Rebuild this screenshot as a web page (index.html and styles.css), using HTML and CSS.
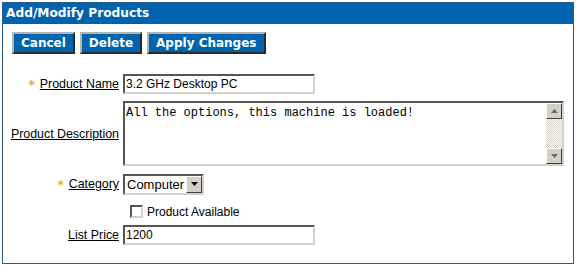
FILE: index.html
```html
<!DOCTYPE html>
<html lang="en">
<head>
  <meta charset="UTF-8" />
  <title>Add/Modify Products</title>
  <link rel="stylesheet" href="styles.css">
</head>
<body>

  <!-- Product editor panel -->
  <div class="panel">
    <div class="panel-title">Add/Modify Products</div>

    <div class="toolbar">
      <button class="btn">Cancel</button>
      <button class="btn">Delete</button>
      <button class="btn">Apply Changes</button>
    </div>

    <div class="form">
      <div class="label"><span class="req">*</span><u>Product Name</u></div>
      <div class="field"><input class="text" type="text" value="3.2 GHz Desktop PC"></div>

      <div class="label"><u>Product Description</u></div>
      <div class="field">
        <div class="memo">
          <textarea>All the options, this machine is loaded!</textarea>
          <div class="scroll">
            <span class="scroll-btn">
              <svg width="7" height="4" viewBox="0 0 7 4"><path d="M3.5 0 L7 4 L0 4 Z"/></svg>
            </span>
            <span class="scroll-track"></span>
            <span class="scroll-btn">
              <svg width="7" height="4" viewBox="0 0 7 4"><path d="M0 0 L7 0 L3.5 4 Z"/></svg>
            </span>
          </div>
        </div>
      </div>

      <div class="label"><span class="req">*</span><u>Category</u></div>
      <div class="field">
        <div class="select">
          <span class="select-value">Computer</span>
          <span class="select-btn">
            <svg width="7" height="4" viewBox="0 0 7 4"><path d="M0 0 L7 0 L3.5 4 Z" fill="#000"/></svg>
          </span>
        </div>
      </div>

      <div class="label"></div>
      <div class="field check-row">
        <span class="checkbox"></span>
        <span>Product Available</span>
      </div>

      <div class="label"><u>List Price</u></div>
      <div class="field"><input class="text" type="text" value="1200"></div>
    </div>
  </div>

</body>
</html>
```

FILE: styles.css
```css
body {
  margin: 0;
  background: #fff;
  font-family: 'Liberation Sans', Arial, sans-serif;
  font-size: 12px;
  color: #000;
}

.panel {
  width: 570px;
  height: 260px;
  margin: 2px 0 0 2px;
  border: 1px solid #2b5a86;
  background: #fff;
}

.panel-title {
  height: 21px;
  padding-left: 3px;
  background: #0063ae;
  color: #fff;
  font-family: 'DejaVu Sans', Verdana, sans-serif;
  font-weight: bold;
  font-size: 12.2px;
  line-height: 21px;
}

.toolbar {
  display: flex;
  gap: 5px;
  padding: 8px 0 0 9px;
}

.btn {
  height: 22px;
  padding: 0 7px;
  background: #0063ae;
  color: #fff;
  font-family: 'DejaVu Sans', Verdana, sans-serif;
  font-weight: bold;
  font-size: 12px;
  border: 2px solid;
  border-color: #b4b4b4 #2a2a2a #2a2a2a #b4b4b4;
  cursor: pointer;
}

.form {
  display: grid;
  grid-template-columns: 116px 1fr;
  grid-template-rows: 20px 65px 21px 13px 20px;
  column-gap: 4px;
  row-gap: 7px;
  margin-top: 20px;
}

.form > :nth-child(5),
.form > :nth-child(6) {
  margin-bottom: -1px;
}

.form > :nth-child(7),
.form > :nth-child(8),
.form > :nth-child(9),
.form > :nth-child(10) {
  margin-top: 4px;
  margin-bottom: -4px;
}

.label {
  display: flex;
  align-items: center;
  justify-content: flex-end;
  white-space: nowrap;
  font-size: 12.4px;
}

.req {
  color: #f7a21b;
  font-family: 'DejaVu Sans', sans-serif;
  font-weight: bold;
  font-size: 12px;
  margin-right: 5px;
  position: relative;
  top: 1px;
}

.field {
  display: flex;
  align-items: center;
}

.text {
  box-sizing: border-box;
  width: 192px;
  height: 20px;
  padding: 0 1px;
  font-family: 'Liberation Sans', Arial, sans-serif;
  font-size: 12px;
  border: 2px solid;
  border-color: #555 #d4d0c8 #d4d0c8 #555;
  outline: none;
}

.memo {
  box-sizing: border-box;
  display: flex;
  width: 441px;
  height: 65px;
  border: 2px solid;
  border-color: #555 #d4d0c8 #d4d0c8 #555;
}

.memo textarea {
  flex: 1;
  border: none;
  padding: 3px 1px 0;
  resize: none;
  outline: none;
  overflow: hidden;
  font-family: 'Liberation Mono', 'Courier New', monospace;
  font-size: 12px;
  line-height: 14px;
}

.scroll {
  display: flex;
  flex-direction: column;
  width: 16px;
}

.scroll-btn {
  box-sizing: border-box;
  display: flex;
  align-items: center;
  justify-content: center;
  height: 16px;
  background: #d4d0c8;
  border: 1px solid;
  border-color: #fff #404040 #404040 #fff;
}

.scroll-btn svg path {
  fill: #6a6a6a;
}

.scroll-track {
  flex: 1;
  background: repeating-conic-gradient(#d4d0c8 0 25%, #fff 0 50%) 0 0 / 2px 2px;
}

.select {
  box-sizing: border-box;
  display: flex;
  align-items: center;
  width: 81px;
  height: 21px;
  border: 2px solid;
  border-color: #555 #d4d0c8 #d4d0c8 #555;
  background: #fff;
  font-size: 13px;
}

.select-value {
  flex: 1;
  padding-left: 2px;
}

.select-btn {
  box-sizing: border-box;
  display: flex;
  align-items: center;
  justify-content: center;
  width: 16px;
  height: 17px;
  background: #d4d0c8;
  border: 1px solid;
  border-color: #fff #404040 #404040 #fff;
}

.check-row {
  gap: 4px;
  padding-left: 7px;
}

.checkbox {
  box-sizing: border-box;
  width: 13px;
  height: 13px;
  background: #fff;
  border: 2px solid;
  border-color: #555 #d4d0c8 #d4d0c8 #555;
}
```
